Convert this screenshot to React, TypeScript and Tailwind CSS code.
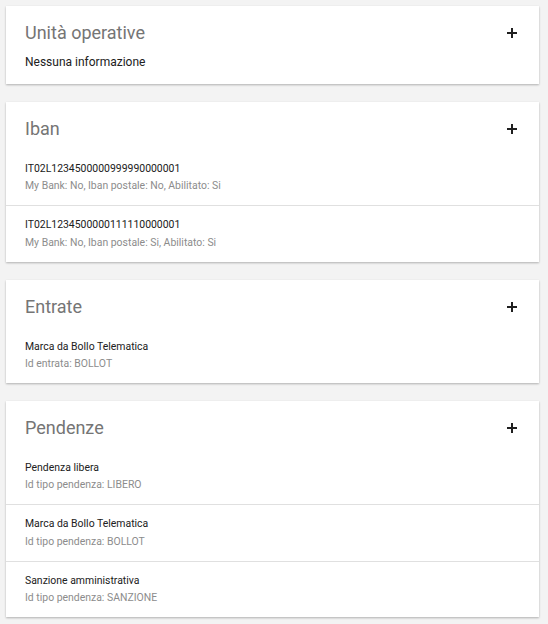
import React from "react";

type Item = { title: string; sub: string };

function Plus() {
  return (
    <svg width="12" height="12" viewBox="0 0 12 12" className="block">
      <path d="M6 1v10M1 6h10" stroke="#1f1f1f" strokeWidth="2" />
    </svg>
  );
}

function Card({ title, items, empty }: { title: string; items?: Item[]; empty?: string }) {
  return (
    <div className="bg-white shadow-[0_1px_2px_rgba(0,0,0,0.28)]">
      <div className="flex h-[48px] items-center justify-between pl-[19px] pr-[21px] pt-[6px]">
        <h2 className="text-[18px] leading-[24px] text-[#757575]">{title}</h2>
        <Plus />
      </div>
      {empty ? (
        <div className="pl-[19px] pb-[13px] text-[12px] leading-[17.16px] text-[#212121]">{empty}</div>
      ) : (
        <div className="divide-y divide-[#e0e0e0]">
          {items!.map((it, i) => (
            <div key={i} className="pl-[19px] pt-[10px] pb-[11px] text-[10.45px] leading-[17.16px]">
              <div className="text-[#212121]">{it.title}</div>
              <div className="text-[#8c8c8c]">{it.sub}</div>
            </div>
          ))}
        </div>
      )}
    </div>
  );
}

export default function App() {
  return (
    <div
      className="min-h-[624px] bg-[#f3f3f3] pl-[6px] pr-[9px] pt-[6px] pb-[8px] flex flex-col gap-[18px]"
      style={{ fontFamily: "Roboto, 'Noto Sans', sans-serif" }}
    >
      <Card title="Unità operative" empty="Nessuna informazione" />
      <Card
        title="Iban"
        items={[
          { title: "IT02L1234500000999990000001", sub: "My Bank: No, Iban postale: No, Abilitato: Si" },
          { title: "IT02L1234500000111110000001", sub: "My Bank: No, Iban postale: Si, Abilitato: Si" },
        ]}
      />
      <Card title="Entrate" items={[{ title: "Marca da Bollo Telematica", sub: "Id entrata: BOLLOT" }]} />
      <Card
        title="Pendenze"
        items={[
          { title: "Pendenza libera", sub: "Id tipo pendenza: LIBERO" },
          { title: "Marca da Bollo Telematica", sub: "Id tipo pendenza: BOLLOT" },
          { title: "Sanzione amministrativa", sub: "Id tipo pendenza: SANZIONE" },
        ]}
      />
    </div>
  );
}
